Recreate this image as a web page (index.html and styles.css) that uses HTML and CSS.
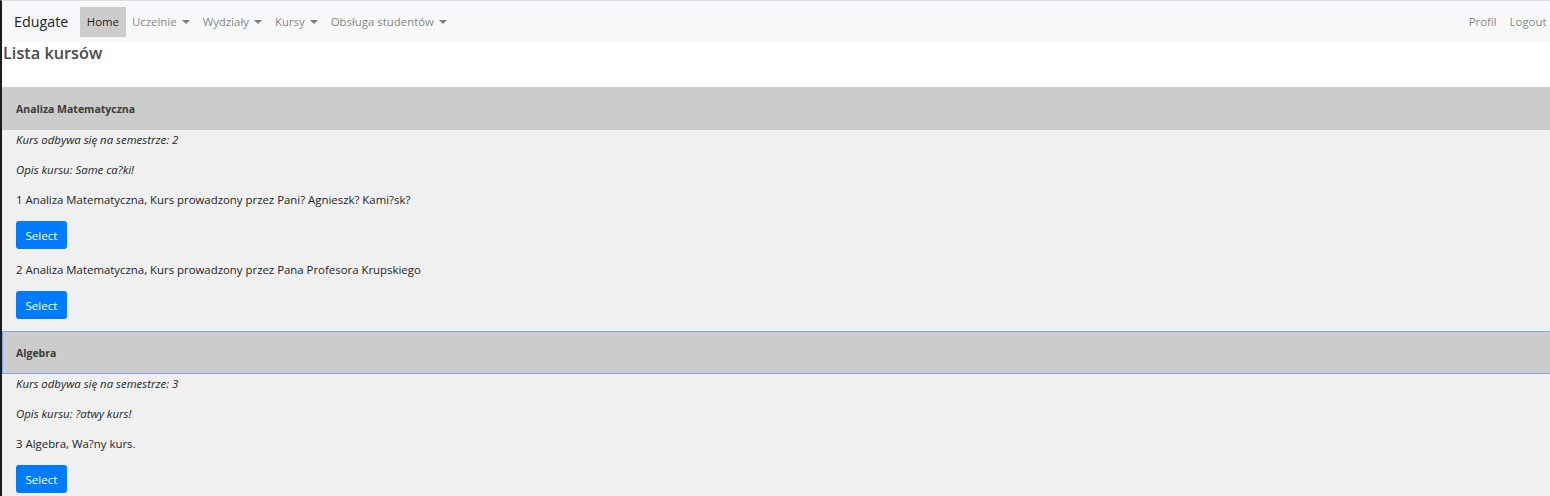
FILE: index.html
```html
<!DOCTYPE html>
<html lang="pl">
<head>
<meta charset="utf-8">
<title>Edugate</title>
<link rel="stylesheet" href="styles.css">
</head>
<body>
<nav class="navbar">
  <a class="brand" href="#">Edugate</a>
  <ul class="nav">
    <li><a class="nav-link active" href="#">Home</a></li>
    <li><a class="nav-link toggle" href="#">Uczelnie</a></li>
    <li><a class="nav-link toggle" href="#">Wydziały</a></li>
    <li><a class="nav-link toggle" href="#">Kursy</a></li>
    <li><a class="nav-link toggle" href="#">Obsługa studentów</a></li>
  </ul>
  <ul class="nav nav-right">
    <li><a class="nav-link" href="#">Profil</a></li>
    <li><a class="nav-link" href="#">Logout</a></li>
  </ul>
</nav>
<h4 class="title">Lista kursów</h4>
<div class="accordion">
  <h3 class="acc-header">Analiza Matematyczna</h3>
  <div class="acc-content">
    <p class="info">Kurs odbywa się na semestrze: 2</p>
    <p class="info">Opis kursu: Same ca?ki!</p>
    <p>1 Analiza Matematyczna, Kurs prowadzony przez Pani? Agnieszk? Kami?sk?</p>
    <button class="btn">Select</button>
    <p>2 Analiza Matematyczna, Kurs prowadzony przez Pana Profesora Krupskiego</p>
    <button class="btn">Select</button>
  </div>
  <h3 class="acc-header focused">Algebra</h3>
  <div class="acc-content">
    <p class="info">Kurs odbywa się na semestrze: 3</p>
    <p class="info">Opis kursu: ?atwy kurs!</p>
    <p>3 Algebra, Wa?ny kurs.</p>
    <button class="btn">Select</button>
  </div>
</div>
</body>
</html>
```
FILE: styles.css
```css
html, body {
  margin: 0;
  padding: 0;
}
body {
  font-family: "Open Sans", "Noto Sans", sans-serif;
  font-size: 11.4px;
  line-height: 18px;
  color: #212529;
  background: #fff;
  border-left: 2px solid #1b1b1b;
  border-top: 1px solid #dadcdf;
  min-height: 495px;
}
.navbar {
  display: flex;
  align-items: center;
  height: 41px;
  background: #f8f9fa;
  padding: 0 0 0 12px;
}
.brand {
  font-size: 14.3px;
  color: #212529;
  text-decoration: none;
  margin-right: 12px;
}
.nav {
  display: flex;
  list-style: none;
  margin: 0;
  padding: 0;
}
.nav-right {
  margin-left: auto;
  margin-right: -3px;
}
.nav-link {
  display: block;
  padding: 6px 6.5px;
  line-height: 18px;
  font-size: 11.4px;
  color: rgba(0, 0, 0, 0.5);
  text-decoration: none;
}
.nav-link.active {
  background: #cccccc;
  color: rgba(0, 0, 0, 0.9);
}
.toggle::after {
  content: "";
  display: inline-block;
  margin-left: 5px;
  vertical-align: 2px;
  border-top: 4px solid;
  border-left: 4px solid transparent;
  border-right: 4px solid transparent;
}
.title {
  margin: 0 0 23px 1px;
  font-size: 16.3px;
  line-height: 22px;
  font-weight: 600;
  color: #4a4a4a;
}
.acc-header {
  margin: 0;
  height: 41px;
  display: flex;
  align-items: center;
  padding: 0 13px;
  background: #cccccc;
  border: 1px solid #cccccc;
  font-size: 10.5px;
  font-weight: 700;
  color: #3a3a3a;
}
.acc-header.focused {
  border-color: #7ea6ee;
  border-right-color: #cccccc;
}
.acc-content {
  background: #f0f0f0;
  padding: 1px 14px 0;
  display: flex;
  flex-direction: column;
  align-items: flex-start;
}
.acc-content p {
  margin: 0 0 12px;
}
.info {
  font-style: italic;
}
.btn {
  font-family: inherit;
  font-size: 11.6px;
  color: #fff;
  background: #007bff;
  border: 0;
  border-radius: 3px;
  height: 28px;
  padding: 0 9.5px;
  margin-bottom: 12px;
}
```
